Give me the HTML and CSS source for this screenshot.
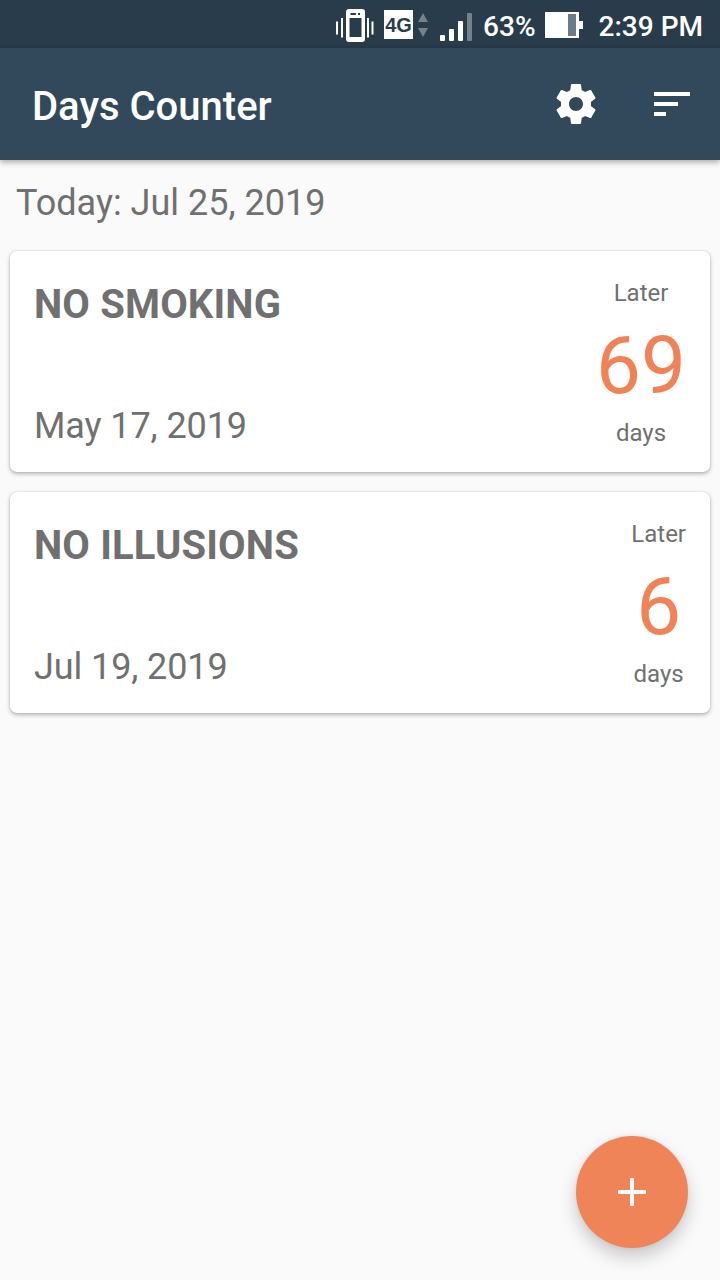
FILE: index.html
```html
<!DOCTYPE html>
<html lang="en">
  <head>
    <meta charset="UTF-8" />
    <meta name="viewport" content="width=device-width, initial-scale=1.0" />
    <title>Days Counter</title>
    <link rel="stylesheet" href="styles.css">
  </head>
  <body>
    <div class="status-bar">
      <svg class="vibrate" width="38" height="33" viewBox="0 0 38 33">
        <path fill="#fff" fill-rule="evenodd" d="M13 0h13a3 3 0 0 1 3 3v27a3 3 0 0 1-3 3H13a3 3 0 0 1-3-3V3a3 3 0 0 1 3-3zM13.5 9v19h12V9zM14.5 4v2h5.5V4zM22 4v2h2V4z" />
        <path stroke="#fff" stroke-width="2" d="M1 12.5v13M6 9v19.500M32 9v19.500M36.500 12.500v13" />
      </svg>
      <span class="network">4G</span>
      <svg class="arrows" width="10" height="24" viewBox="0 0 10 24">
        <path fill="#73828c" d="M5 0l5 9H0zM5 24l5-9H0z" />
      </svg>
      <svg class="signal" width="33" height="28" viewBox="0 0 33 28">
        <rect x="0" y="22" width="5" height="6" rx="1" fill="#fff" />
        <rect x="9" y="16" width="5" height="12" rx="1" fill="#fff" />
        <rect x="18" y="8" width="5" height="20" rx="1" fill="#fff" />
        <rect x="27" y="0" width="5" height="28" rx="1" fill="#73828c" />
      </svg>
      <span class="percent">63%</span>
      <svg class="battery" width="38" height="26" viewBox="0 0 38 26">
        <path fill="#fff" d="M0 0h34v9h4v8h-4v9H0z" />
        <rect x="23" y="2" width="8" height="22" fill="#6b7b87" />
      </svg>
      <span class="time">2:39 PM</span>
    </div>

    <header class="app-bar">
      <h1>Days Counter</h1>
      <svg class="settings" width="48" height="48" viewBox="0 0 24 24">
        <path fill="#fff" d="M19.43 12.98c.04-.32.07-.64.07-.98s-.03-.66-.07-.98l2.11-1.65c.19-.15.24-.42.12-.64l-2-3.46c-.12-.22-.39-.3-.61-.22l-2.49 1c-.52-.4-1.08-.73-1.69-.98l-.38-2.65C14.46 2.18 14.25 2 14 2h-4c-.25 0-.46.18-.49.42l-.38 2.65c-.61.25-1.17.59-1.69.98l-2.49-1c-.23-.09-.49 0-.61.22l-2 3.46c-.13.22-.07.49.12.64l2.11 1.65c-.04.32-.07.65-.07.98s.03.66.07.98l-2.11 1.65c-.19.15-.24.42-.12.64l2 3.46c.12.22.39.3.61.22l2.49-1c.52.4 1.08.73 1.69.98l.38 2.65c.03.24.24.42.49.42h4c.25 0 .46-.18.49-.42l.38-2.65c.61-.25 1.17-.59 1.69-.98l2.49 1c.23.09.49 0 .61-.22l2-3.46c.12-.22.07-.49-.12-.64l-2.11-1.65zM12 15.5c-1.93 0-3.5-1.57-3.5-3.5s1.57-3.5 3.5-3.5 3.5 1.57 3.5 3.5-1.57 3.5-3.5 3.5z" />
      </svg>
      <svg width="48" height="48" viewBox="0 0 24 24">
        <path fill="#fff" d="M3 18h6v-2H3v2zM3 6v2h18V6H3zm0 7h12v-2H3v2z" />
      </svg>
    </header>

    <main>
      <p class="today">Today: Jul 25, 2019</p>

      <div class="card">
        <div class="info">
          <h2>NO SMOKING</h2>
          <p class="date">May 17, 2019</p>
        </div>
        <div class="counter">
          <span>Later</span>
          <span class="number">69</span>
          <span>days</span>
        </div>
      </div>

      <div class="card">
        <div class="info">
          <h2>NO ILLUSIONS</h2>
          <p class="date">Jul 19, 2019</p>
        </div>
        <div class="counter">
          <span>Later</span>
          <span class="number">6</span>
          <span>days</span>
        </div>
      </div>
    </main>

    <button class="fab" aria-label="Add">
      <svg width="48" height="48" viewBox="0 0 24 24">
        <path fill="#fff" d="M19 13h-6v6h-2v-6H5v-2h6V5h2v6h6v2z" />
      </svg>
    </button>
  </body>
</html>
```
FILE: styles.css
```css
* {
  box-sizing: border-box;
}
body {
  margin: 0;
  min-height: 1280px;
  font-family: Roboto, sans-serif;
  background-color: #fafafa;
  color: #707070;
}
h1,
h2,
p {
  margin: 0;
}
svg {
  display: block;
  flex: none;
}
.status-bar {
  display: flex;
  align-items: center;
  justify-content: flex-end;
  height: 48px;
  padding: 4px 17px 0 0;
  background-color: #293c4b;
  color: white;
  font-size: 28px;
  font-weight: 500;
  line-height: 44px;
  white-space: nowrap;
}
.vibrate {
  margin-bottom: 1px;
}
.network {
  width: 29px;
  height: 29px;
  margin: 0 5px 3px 10px;
  background: white;
  color: #293c4b;
  font-family: "Liberation Sans", sans-serif;
  font-size: 20px;
  font-weight: 700;
  line-height: 31px;
  text-align: center;
}
.arrows {
  margin-bottom: 3px;
}
.signal {
  margin: 2px 10px 0 12px;
}
.percent,
.time {
  padding-top: 2px;
}
.battery {
  margin: 0 16px 2px 9px;
}
.app-bar {
  display: flex;
  align-items: center;
  height: 112px;
  padding: 0 24px 0 32px;
  background-color: #32495c;
  color: white;
  box-shadow: 0 2px 6px rgba(0, 0, 0, 0.35);
}
.app-bar h1 {
  flex: 1;
  padding-top: 6px;
  font-size: 40px;
  font-weight: 500;
  line-height: 48px;
}
.settings {
  margin-right: 48px;
}
main {
  padding: 22px 10px 0;
}
.today {
  padding: 0 6px;
  margin-bottom: 27px;
  font-size: 36px;
  line-height: 42px;
}
.card {
  display: flex;
  justify-content: space-between;
  height: 221px;
  margin-bottom: 20px;
  padding: 28px 24px 25px;
  background: white;
  border-radius: 7px;
  box-shadow: 0 2px 4px rgba(0, 0, 0, 0.27), 0 0 2px rgba(0, 0, 0, 0.16);
}
.info {
  display: flex;
  flex-direction: column;
  justify-content: space-between;
}
.info h2 {
  padding-top: 2px;
  font-size: 40px;
  font-weight: 700;
  letter-spacing: 0.15px;
  line-height: 48px;
}
.date {
  font-size: 36px;
  letter-spacing: -0.1px;
  line-height: 42px;
}
.counter {
  display: flex;
  flex-direction: column;
  align-items: center;
  font-size: 24px;
  line-height: 28px;
}
.number {
  margin: 12px 0 6px;
  color: #f08256;
  font-size: 80px;
  line-height: 94px;
}
.fab {
  position: fixed;
  right: 32px;
  bottom: 32px;
  display: flex;
  align-items: center;
  justify-content: center;
  width: 112px;
  height: 112px;
  padding: 0;
  border: none;
  border-radius: 50%;
  background-color: #f08459;
  box-shadow: 0 9px 18px rgba(0, 0, 0, 0.2), 0 0 5px rgba(0, 0, 0, 0.08);
  cursor: pointer;
}
```
